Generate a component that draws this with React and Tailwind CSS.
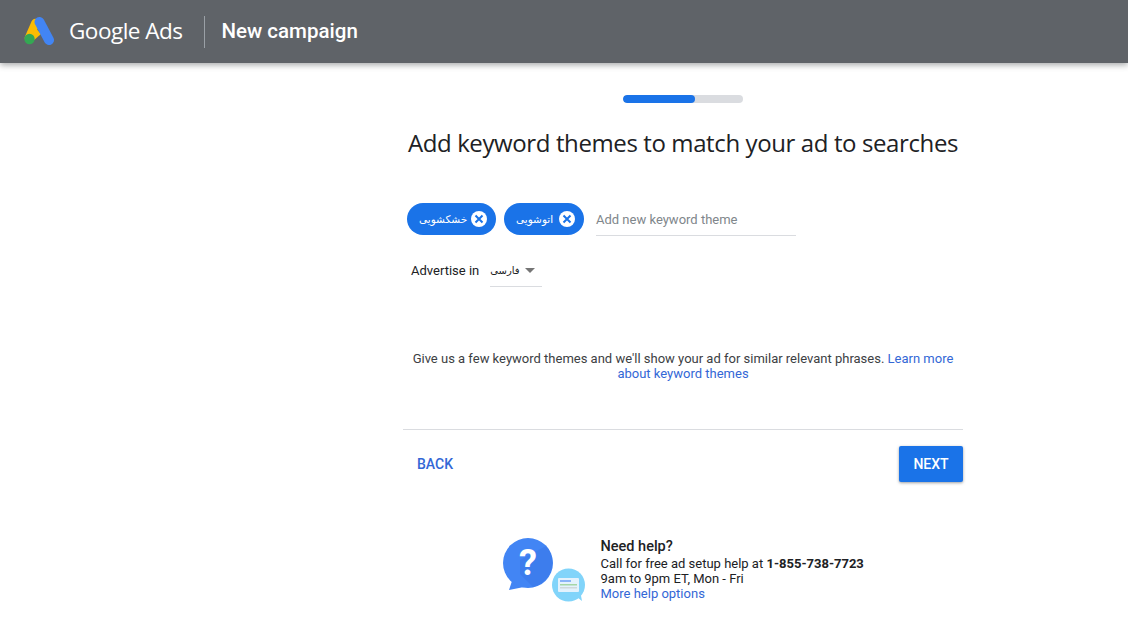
function Logo() {
  return (
    <svg width="30" height="29" viewBox="0 0 30 29" className="shrink-0">
      <path d="M11.5 6 L5 21" stroke="#fbbc04" strokeWidth="8.5" strokeLinecap="round" />
      <path d="M10 9 L17 17 L9 24 Z" fill="#fbbc04" />
      <path d="M15.5 5 L25 23" stroke="#4285f4" strokeWidth="10" strokeLinecap="round" />
      <circle cx="5.5" cy="22" r="5.2" fill="#34a853" />
    </svg>
  );
}

function HelpIcon() {
  return (
    <svg width="84" height="66" viewBox="0 0 84 66" className="shrink-0">
      <path d="M9 43 L6 52 L21 49 Z" fill="#4285f4" />
      <circle cx="25" cy="25" r="25" fill="#4285f4" />
      <path d="M43 8 A25 25 0 0 1 30 49 L17 36 L17 22 Z" fill="#3b78e7" opacity="0.6" />
      <text x="25" y="37" textAnchor="middle" fontFamily="Roboto, sans-serif" fontWeight="700" fontSize="36" fill="#ffffff">?</text>
      <path d="M70 56 L79 63 L77 52 Z" fill="#81d4fa" />
      <circle cx="65.5" cy="47" r="16.5" fill="#81d4fa" />
      <rect x="55" y="40" width="21" height="14" rx="1" fill="#e3f2fd" />
      <rect x="57" y="42" width="11" height="2" fill="#8ab4f8" />
      <rect x="57" y="46" width="17" height="1.5" fill="#a5d6a7" />
      <rect x="57" y="49" width="17" height="1.5" fill="#cfd8dc" />
    </svg>
  );
}

function Chip({ label, width }) {
  return (
    <div className={`flex items-center justify-between h-8 rounded-full bg-[#1a73e8] pl-3 pr-[9px] ${width}`}>
      <span className="text-[10.5px] text-white font-['DejaVu_Sans',sans-serif] leading-none" dir="rtl">{label}</span>
      <svg width="16" height="16" viewBox="0 0 16 16" className="shrink-0">
        <circle cx="8" cy="8" r="8" fill="#fff" />
        <path d="M4.5 4.5 L11.5 11.5 M11.5 4.5 L4.5 11.5" stroke="#1a73e8" strokeWidth="2" />
      </svg>
    </div>
  );
}

export default function App() {
  return (
    <div className="min-h-[627px] bg-white font-['Roboto',sans-serif] text-[#202124] overflow-hidden">
      <header className="h-[63px] bg-[#5f6368] flex items-center pl-[24px] shadow-[0_2px_6px_rgba(60,64,67,0.45)]">
        <Logo />
        <span className="ml-[15px] -mt-[2px] text-[22.5px] tracking-[-0.5px] text-white font-['Open_Sans',sans-serif]">Google Ads</span>
        <div className="w-px h-[32px] bg-[#9aa0a6] ml-[21px]" />
        <span className="ml-[17px] text-[20.5px] font-medium text-white">New campaign</span>
      </header>

      <main className="ml-[403px] w-[560px] flex flex-col">
        <div className="mt-[32px] mx-auto w-[120px] h-2 rounded-full bg-[#dadce0] overflow-hidden">
          <div className="h-full w-[72px] rounded-full bg-[#1a73e8]" />
        </div>
        <h1 className="mt-[24px] text-center text-[24px] leading-[32px] font-normal text-[#202124] font-['Open_Sans',sans-serif] tracking-[-0.39px]">
          Add keyword themes to match your ad to searches
        </h1>

        <div className="mt-[44px] ml-[4px] flex items-center gap-2">
          <Chip label="خشکشویی" width="w-[89px]" />
          <Chip label="اتوشویی" width="w-[80px]" />
          <div className="ml-[4px] w-[200px] h-8 flex items-center border-b border-[#dadce0] text-[13px] text-[#80868b] relative top-px">
            Add new keyword theme
          </div>
        </div>

        <div className="mt-[20px] ml-[8px] flex items-center text-[13px] text-[#202124]">
          <span>Advertise in</span>
          <div className="ml-[11px] w-[52px] h-8 flex items-center border-b border-[#dadce0]">
            <span className="text-[10px] font-['DejaVu_Sans',sans-serif]" dir="rtl">فارسی</span>
            <span className="ml-[5px] w-0 h-0 border-x-[5px] border-x-transparent border-t-[5px] border-t-[#757575]" />
          </div>
        </div>

        <p className="mt-[64px] text-center text-[13px] leading-[15px] text-[#3c4043] px-2">
          Give us a few keyword themes and we'll show your ad for similar relevant phrases.{" "}
          <a className="text-[#3367d6]">Learn more about keyword themes</a>
        </p>

        <div className="mt-[48px] border-t border-[#dadce0]" />

        <div className="mt-4 flex items-center justify-between">
          <button className="ml-[14px] text-[14px] font-medium text-[#3367d6]">BACK</button>
          <button className="w-16 h-9 rounded-[2px] bg-[#1a73e8] text-white text-[14px] font-medium shadow-[0_1px_3px_rgba(60,64,67,0.5)]">NEXT</button>
        </div>

        <div className="mt-[56px] ml-[100px] flex items-start">
          <HelpIcon />
          <div className="ml-[13.5px] text-[13px] leading-[15px] text-[#202124]">
            <div className="text-[14.5px] font-medium leading-[18px]">Need help?</div>
            <div>Call for free ad setup help at <span className="font-bold">1-855-738-7723</span></div>
            <div>9am to 9pm ET, Mon - Fri</div>
            <a className="text-[#3367d6]">More help options</a>
          </div>
        </div>
      </main>
    </div>
  );
}
